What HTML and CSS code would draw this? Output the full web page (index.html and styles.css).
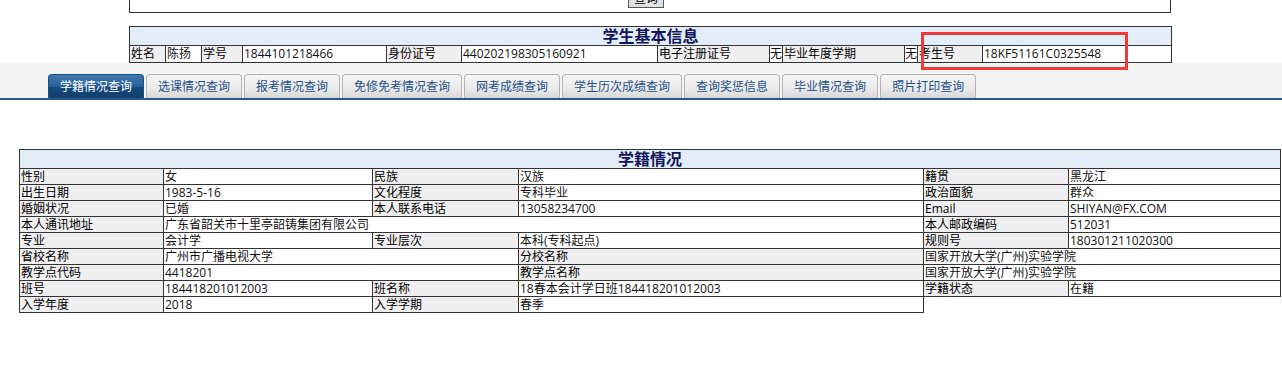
FILE: index.html
```html
<!DOCTYPE html>
<html lang="zh-CN">
<head>
<meta charset="UTF-8">
<title>学籍情况查询</title>
<link rel="stylesheet" href="styles.css">
</head>
<body>
<div class="top">
  <div class="search-box">
    <button class="btn">查询</button>
  </div>
  <table class="grid basic">
    <colgroup>
      <col style="width:36px"><col style="width:36px"><col style="width:41px"><col style="width:144px">
      <col style="width:75px"><col style="width:196px"><col style="width:112px"><col style="width:13px">
      <col style="width:122px"><col style="width:13px"><col style="width:65px"><col style="width:189px">
    </colgroup>
    <tr><th colspan="12" class="title">学生基本信息</th></tr>
    <tr>
      <td class="lbl">姓名</td><td>陈扬</td>
      <td class="lbl">学号</td><td>1844101218466</td>
      <td class="lbl">身份证号</td><td>440202198305160921</td>
      <td class="lbl">电子注册证号</td><td class="tight">无</td>
      <td class="lbl">毕业年度学期</td><td class="tight">无</td>
      <td class="lbl">考生号</td><td>18KF51161C0325548</td>
    </tr>
  </table>
  <div class="mark"></div>
</div>

<div class="tabs">
  <a class="tab active">学籍情况查询</a>
  <a class="tab">选课情况查询</a>
  <a class="tab">报考情况查询</a>
  <a class="tab">免修免考情况查询</a>
  <a class="tab">网考成绩查询</a>
  <a class="tab">学生历次成绩查询</a>
  <a class="tab">查询奖惩信息</a>
  <a class="tab">毕业情况查询</a>
  <a class="tab">照片打印查询</a>
</div>

<table class="grid status">
  <colgroup>
    <col style="width:144px"><col style="width:209px"><col style="width:146px">
    <col style="width:405px"><col style="width:145px"><col style="width:212px">
  </colgroup>
  <tr><th colspan="6" class="title">学籍情况</th></tr>
  <tr>
    <td class="lbl">性别</td><td>女</td>
    <td class="lbl">民族</td><td>汉族</td>
    <td class="lbl">籍贯</td><td>黑龙江</td>
  </tr>
  <tr>
    <td class="lbl">出生日期</td><td>1983-5-16</td>
    <td class="lbl">文化程度</td><td>专科毕业</td>
    <td class="lbl">政治面貌</td><td>群众</td>
  </tr>
  <tr>
    <td class="lbl">婚姻状况</td><td>已婚</td>
    <td class="lbl">本人联系电话</td><td>13058234700</td>
    <td class="lbl">Email</td><td>SHIYAN@FX.COM</td>
  </tr>
  <tr>
    <td class="lbl">本人通讯地址</td><td colspan="3">广东省韶关市十里亭韶铸集团有限公司</td>
    <td class="lbl">本人邮政编码</td><td>512031</td>
  </tr>
  <tr>
    <td class="lbl">专业</td><td>会计学</td>
    <td class="lbl">专业层次</td><td>本科(专科起点)</td>
    <td class="lbl">规则号</td><td>180301211020300</td>
  </tr>
  <tr>
    <td class="lbl">省校名称</td><td colspan="2">广州市广播电视大学</td>
    <td class="lbl">分校名称</td><td colspan="2">国家开放大学(广州)实验学院</td>
  </tr>
  <tr>
    <td class="lbl">教学点代码</td><td colspan="2">4418201</td>
    <td class="lbl">教学点名称</td><td colspan="2">国家开放大学(广州)实验学院</td>
  </tr>
  <tr>
    <td class="lbl">班号</td><td>184418201012003</td>
    <td class="lbl">班名称</td><td>18春本会计学日班184418201012003</td>
    <td class="lbl">学籍状态</td><td>在籍</td>
  </tr>
  <tr>
    <td class="lbl">入学年度</td><td>2018</td>
    <td class="lbl">入学学期</td><td>春季</td>
  </tr>
</table>
</body>
</html>
```

FILE: styles.css
```css
body {
  margin: 0;
  font-family: "Open Sans", "Noto Sans CJK SC", sans-serif;
  font-size: 12px;
  color: #000;
  background: #fff;
}
.top {
  position: relative;
  width: 1042px;
  margin-left: 129px;
}
.search-box {
  height: 8px;
  padding-bottom: 4px;
  border: 1px solid #333;
  border-top: none;
  display: flex;
  justify-content: center;
  align-items: flex-end;
}
.btn {
  height: 18px;
  width: 36px;
  padding: 0;
  margin-right: 8px;
  font: inherit;
  line-height: 16px;
  background: #e1e1e1;
  border: 1px solid #555;
}
.grid {
  border-collapse: collapse;
  table-layout: fixed;
}
.grid td {
  border: 1px solid #333;
  padding: 0 0 0 1px;
  height: 15px;
  line-height: 15px;
  white-space: nowrap;
  overflow: hidden;
  background: #fff;
  color: #111;
}
.grid td.lbl {
  background: #efefef;
  color: #000;
}
.grid td.tight {
  padding: 0;
  overflow: visible;
}
.grid th.title {
  border: 1px solid #333;
  padding: 0;
  height: 18px;
  line-height: 18px;
  font-size: 16px;
  font-weight: bold;
  color: #15155a;
  text-align: center;
  background: repeating-linear-gradient(#d9e6f3 0, #d9e6f3 1px, #edf3fa 1px, #edf3fa 2px);
}
.basic {
  width: 1042px;
  margin-top: 13px;
}
.basic td {
  height: 16px;
  line-height: 16px;
}
.mark {
  position: absolute;
  left: 792px;
  top: 32px;
  width: 201px;
  height: 32px;
  border: 3px solid #f03a3a;
}
.tabs {
  display: flex;
  gap: 2px;
  align-items: flex-end;
  height: 24px;
  padding: 11px 0 0 48px;
  background: #f4f4f4;
  border-bottom: 2px solid #275a8c;
}
.tab {
  display: block;
  height: 23px;
  line-height: 24px;
  padding: 0 11px;
  border: 1px solid #b4b4b4;
  border-bottom: none;
  border-radius: 4px 4px 0 0;
  color: #1f4f86;
  background: linear-gradient(#f6f6f6 0%, #ececec 55%, #d7d7d7 100%);
  white-space: nowrap;
}
.tab.active {
  color: #fff;
  border-color: #1d4f80;
  background: linear-gradient(#3d77ae 0%, #2a639b 50%, #154a7e 52%, #123f6d 100%);
}
.status {
  width: 1261px;
  margin: 49px 0 0 19px;
}
```
